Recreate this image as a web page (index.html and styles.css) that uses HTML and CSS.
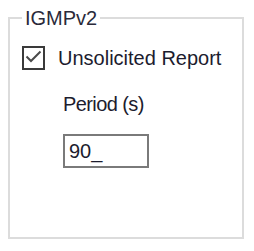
FILE: index.html
```html
<!DOCTYPE html>
<html lang="en">
  <head>
    <meta charset="UTF-8" />
    <title>IGMPv2</title>
    <link rel="stylesheet" href="styles.css">
  </head>
  <body>
    <fieldset class="group">
      <legend>IGMPv2</legend>

      <label class="check-row">
        <span class="check-box">
          <svg width="19" height="19" viewBox="0 0 19 19">
            <polyline points="2.5,8.5 7,13 16.5,3.5" fill="none" stroke="#4a4a4a" stroke-width="2" />
          </svg>
        </span>
        <span>Unsolicited Report</span>
      </label>

      <div class="period">
        <div class="period-label">Period (s)</div>
        <div class="text-box">90_</div>
      </div>
    </fieldset>
  </body>
</html>
```

FILE: styles.css
```css
body {
  margin: 0;
  background: #fff;
  font-family: "Liberation Sans", Arial, sans-serif;
  font-size: 20px;
  line-height: 23px;
  color: #1c1c2e;
}

.group {
  box-sizing: border-box;
  width: 236px;
  height: 233px;
  margin: 6px 0 0 8px;
  padding: 0 12px;
  border: 2px solid #dcdcdc;
}

.group legend {
  padding: 0 3px;
  line-height: 24px;
  color: #2a2a3a;
}

.check-row {
  display: flex;
  align-items: center;
  gap: 13px;
  margin-top: 16px;
}

.check-box {
  box-sizing: border-box;
  width: 23px;
  height: 24px;
  border: 2px solid #3a3a3a;
  display: flex;
}

.period {
  margin: 23px 0 0 41px;
}

.period-label {
  letter-spacing: -0.6px;
}

.text-box {
  box-sizing: border-box;
  width: 86px;
  height: 34px;
  margin-top: 18px;
  padding: 4px 0 0 4px;
  border: 2px solid #7a7a7a;
  color: #1c1c2e;
}
```
